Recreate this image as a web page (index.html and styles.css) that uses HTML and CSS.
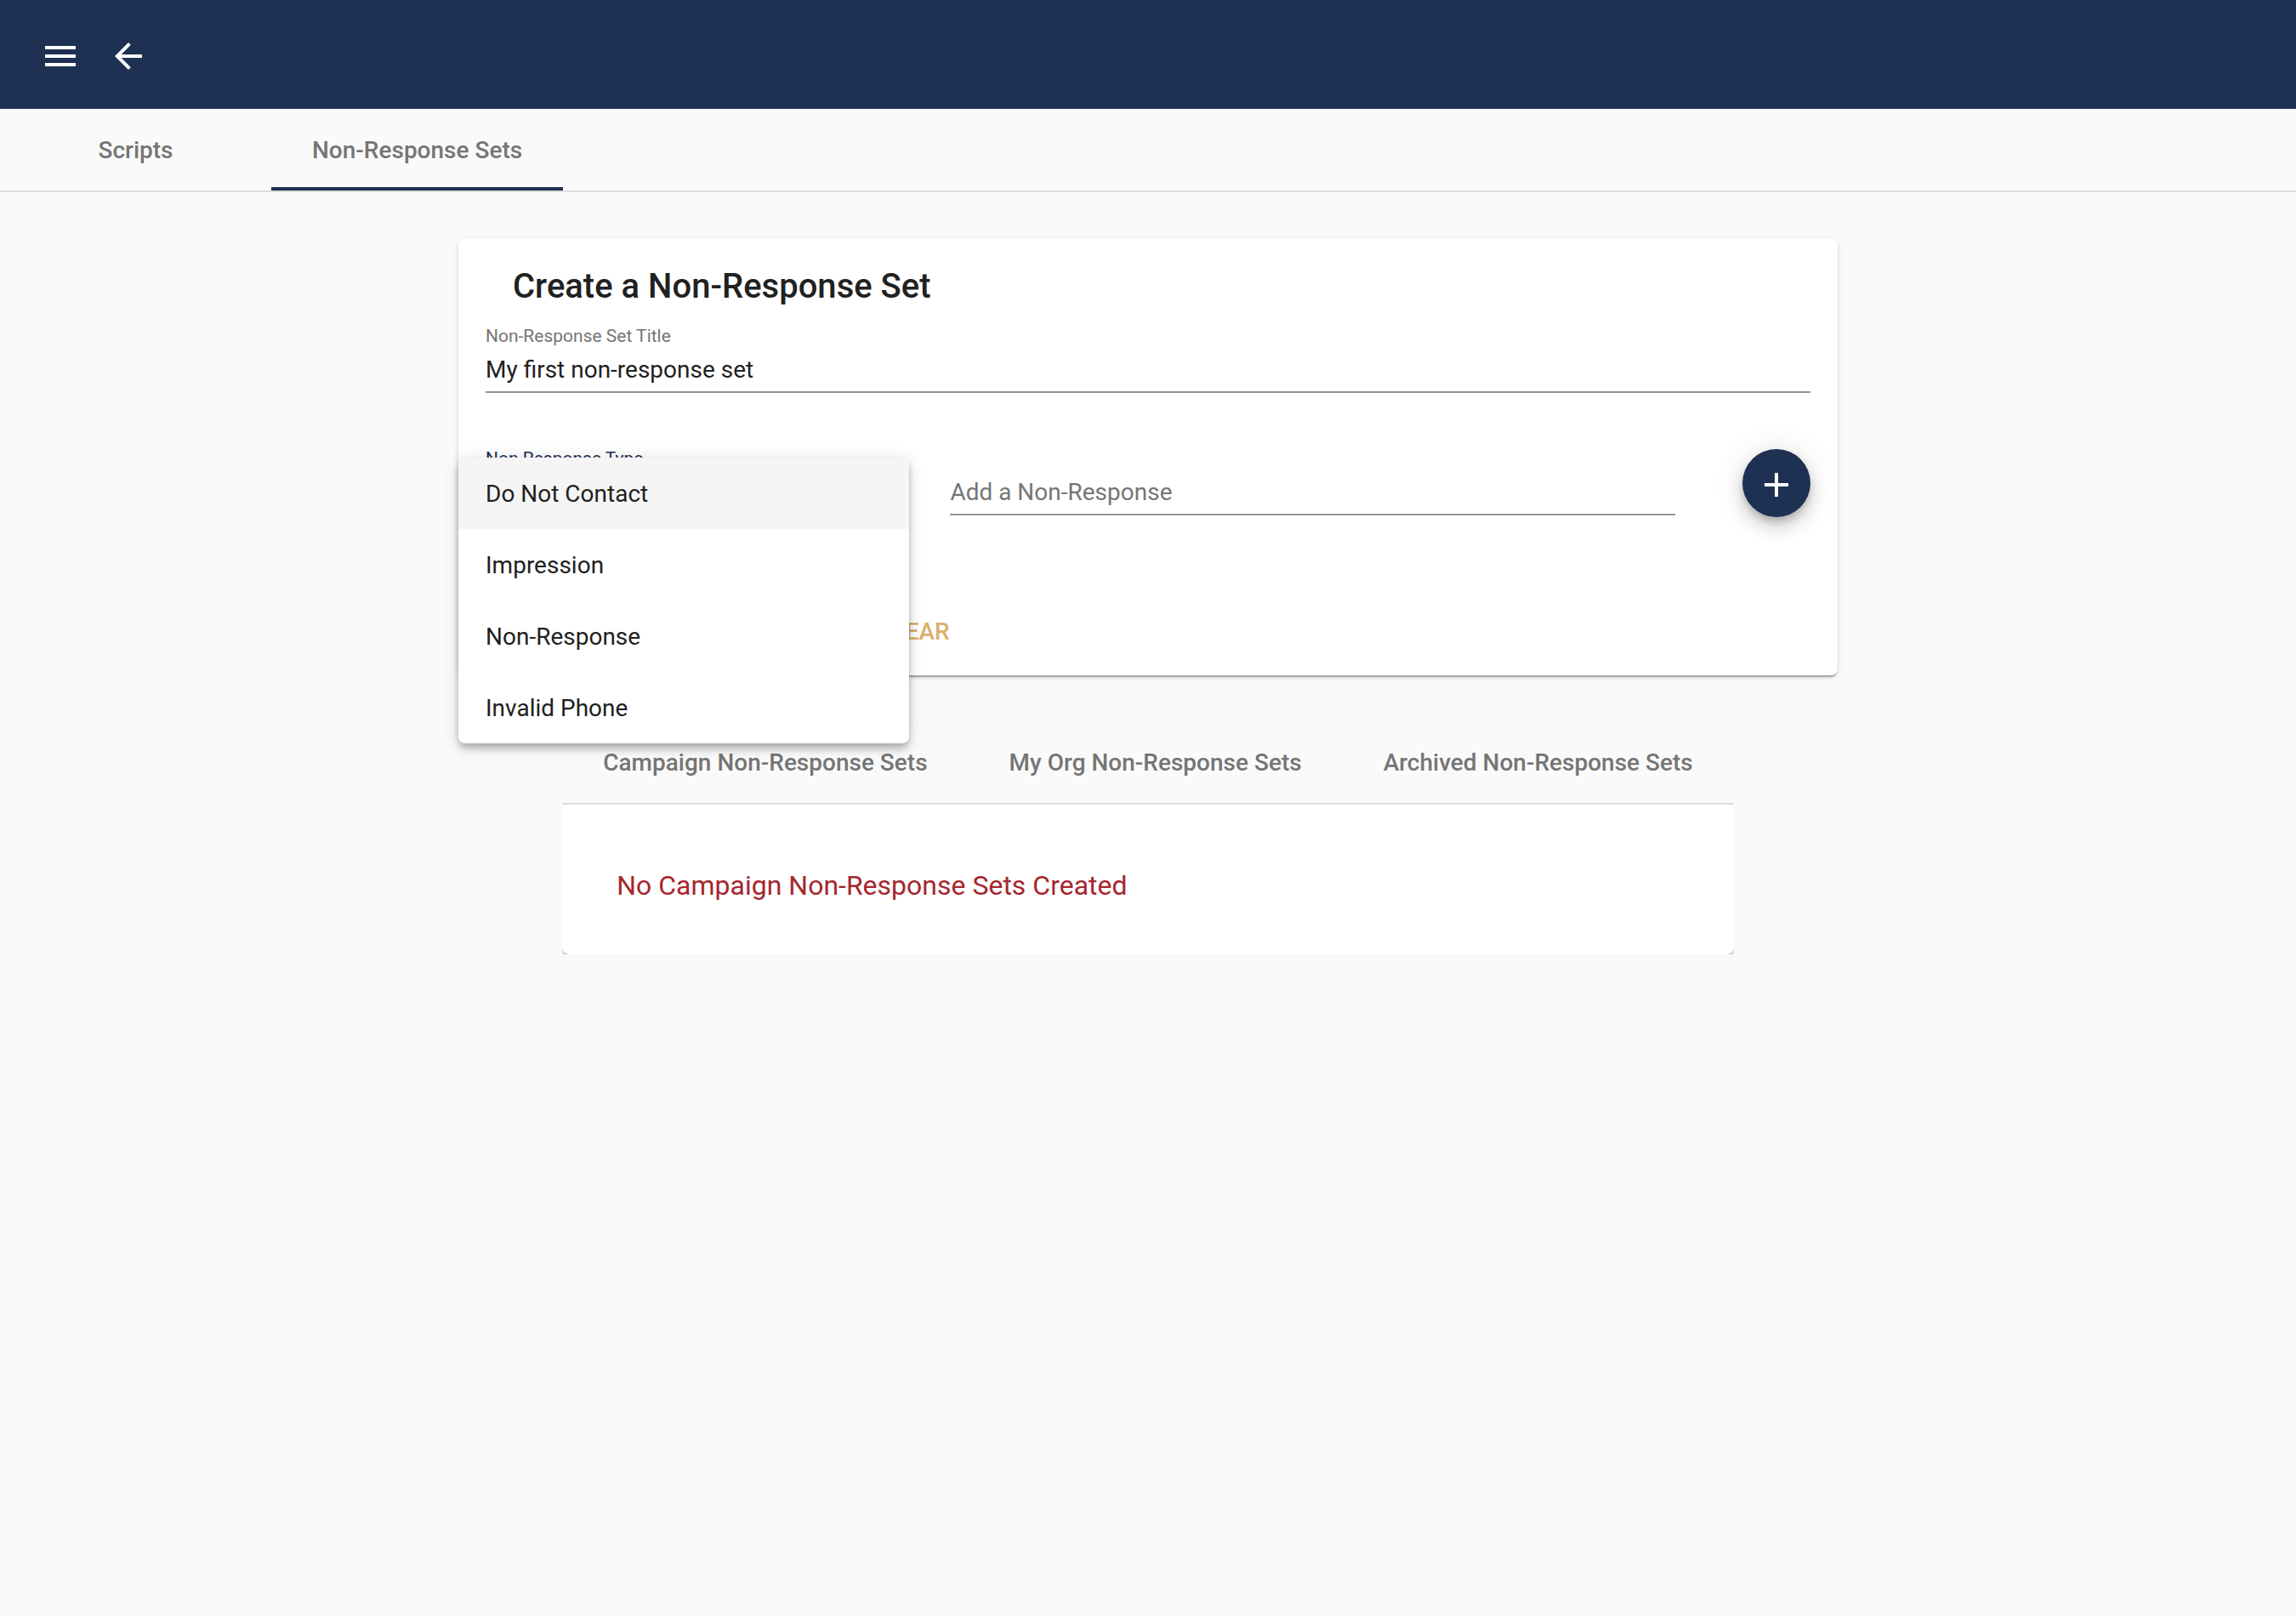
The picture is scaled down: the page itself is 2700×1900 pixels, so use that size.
FILE: index.html
```
<!DOCTYPE html>
<html lang="en">
<head>
<meta charset="utf-8">
<meta name="viewport" content="width=device-width, initial-scale=1">
<title>Non-Response Sets</title>
<link rel="stylesheet" href="styles.css">
</head>
<body>
<header class="toolbar">
  <button class="icon-button" type="button" aria-label="Menu">
    <svg class="icon" viewBox="0 0 24 24" aria-hidden="true"><path d="M3 18h18v-2H3v2zm0-5h18v-2H3v2zm0-7v2h18V6H3z"/></svg>
  </button>
  <button class="icon-button" type="button" aria-label="Back">
    <svg class="icon" viewBox="0 0 24 24" aria-hidden="true"><path d="M20 11H7.83l5.59-5.59L12 4l-8 8 8 8 1.41-1.41L7.83 13H20v-2z"/></svg>
  </button>
</header>

<nav class="tabs">
  <a class="tab" href="#scripts"><span class="tab-label">Scripts</span></a>
  <a class="tab tab-active" href="#sets" aria-current="page"><span class="tab-label">Non-Response Sets</span></a>
</nav>

<main class="content">
  <form class="card editor">
    <h1 class="editor-title">Create a Non-Response Set</h1>
    <div class="field">
      <label class="field-label" for="set-title">Non-Response Set Title</label>
      <input class="field-input" id="set-title" type="text" value="My first non-response set">
    </div>
    <div class="response-row">
      <div class="field type-field">
        <label class="field-label field-label-focused" for="response-type">Non Response Type</label>
        <select class="field-input" id="response-type"></select>
        <ul class="menu" role="listbox" aria-label="Non Response Type">
          <li class="option option-active" role="option" aria-selected="false">Do Not Contact</li>
          <li class="option" role="option" aria-selected="false">Impression</li>
          <li class="option" role="option" aria-selected="false">Non-Response</li>
          <li class="option" role="option" aria-selected="false">Invalid Phone</li>
        </ul>
      </div>
      <div class="field field-unlabelled">
        <input class="field-input" type="text" placeholder="Add a Non-Response" aria-label="Add a Non-Response">
      </div>
      <button class="fab" type="button" aria-label="Add">
        <svg class="icon" viewBox="0 0 24 24" aria-hidden="true"><path d="M19 13h-6v6h-2v-6H5v-2h6V5h2v6h6v2z"/></svg>
      </button>
    </div>
    <div class="actions">
      <button class="clear-button" type="reset">CLEAR</button>
    </div>
  </form>

  <section class="sets">
    <nav class="tabs">
      <a class="tab" href="#campaign"><span class="tab-label">Campaign Non-Response Sets</span></a>
      <a class="tab" href="#org"><span class="tab-label">My Org Non-Response Sets</span></a>
      <a class="tab" href="#archived"><span class="tab-label">Archived Non-Response Sets</span></a>
    </nav>
    <div class="sets-body">
      <div class="card sets-card">
        <p class="empty-message">No Campaign Non-Response Sets Created</p>
      </div>
    </div>
  </section>
</main>
</body>
</html>
```
FILE: styles.css
```
:root {
  --navy: #1f3152;
  --gold: #dab06e;
  --text: #212121;
  --muted: #757575;
  --line: #949494;
}

* {
  box-sizing: border-box;
}

body {
  margin: 0;
  min-height: 100vh;
  background: #fafafa;
  color: var(--text);
  font-family: Roboto, "Liberation Sans", sans-serif;
  font-size: 28px;
}

button,
input,
select {
  font: inherit;
}

.toolbar {
  display: flex;
  align-items: center;
  gap: 32px;
  height: 128px;
  padding: 4px 47px 0;
  background: var(--navy);
}

.icon {
  display: block;
  width: 48px;
  height: 48px;
  fill: #fff;
}

.icon-button {
  padding: 0;
  border: 0;
  background: none;
}

.tabs {
  display: flex;
  border-bottom: 2px solid #dcdcdc;
}

.tab {
  display: flex;
  align-items: center;
  justify-content: center;
  min-width: 319px;
  height: 96px;
  padding: 0 48px;
  color: var(--muted);
  font-weight: 500;
  text-decoration: none;
  white-space: nowrap;
}

.tab-active {
  box-shadow: inset 0 -4px var(--navy);
}

.content {
  display: flex;
  flex-direction: column;
  align-items: center;
  gap: 54px;
  padding: 54px 0;
}

.card {
  border-radius: 8px;
  background: #fff;
  box-shadow:
    0 4px 2px -2px rgba(0, 0, 0, 0.2),
    0 2px 2px 0 rgba(0, 0, 0, 0.14),
    0 2px 6px 0 rgba(0, 0, 0, 0.12);
}

.editor {
  width: calc(60% + 2px);
  padding: 32px 32px 16px;
}

.editor-title {
  margin: 0 0 20px;
  padding-left: 32px;
  font-size: 40px;
  font-weight: 500;
  line-height: 50px;
}

.field {
  display: flex;
  flex-direction: column;
}

.field-unlabelled {
  padding-top: 26px;
}

.field-label {
  color: var(--muted);
  font-size: 21px;
  line-height: 26px;
}

.field-label-focused {
  color: var(--navy);
}

.field-input {
  width: 100%;
  height: 54px;
  padding: 0;
  border: 0;
  border-bottom: 2px solid var(--line);
  border-radius: 0;
  outline: 0;
  background: transparent;
  color: var(--text);
}

.field-input::placeholder {
  color: var(--muted);
}

.response-row {
  display: grid;
  grid-template-columns: 30% 1fr 80px;
  align-items: start;
  gap: 79px;
  min-height: 84px;
  margin-top: 64px;
}

.type-field {
  position: relative;
}

.menu {
  position: absolute;
  z-index: 1;
  top: 12px;
  left: -32px;
  width: calc(100% + 63px);
  margin: 0;
  padding: 0;
  overflow: hidden;
  border-radius: 8px;
  background: #fff;
  box-shadow:
    0 4px 8px -2px rgba(0, 0, 0, 0.2),
    0 8px 10px 0 rgba(0, 0, 0, 0.14),
    0 2px 20px 0 rgba(0, 0, 0, 0.12);
  list-style: none;
}

.option {
  padding: 2px 32px 0;
  line-height: 82px;
}

.option-active {
  background: #f5f5f5;
}

.fab {
  display: flex;
  align-items: center;
  justify-content: center;
  align-self: center;
  width: 80px;
  height: 80px;
  padding: 4px 0 0;
  border: 0;
  border-radius: 50%;
  background: var(--navy);
  box-shadow:
    0 6px 10px -2px rgba(0, 0, 0, 0.2),
    0 12px 20px 0 rgba(0, 0, 0, 0.14),
    0 2px 36px 0 rgba(0, 0, 0, 0.12);
}

.actions {
  display: flex;
  margin-top: 96px;
  padding-left: 28%;
}

.clear-button {
  height: 72px;
  padding: 0 24px;
  border: 0;
  background: none;
  color: var(--gold);
  font-weight: 500;
}

.sets-body {
  overflow: hidden;
}

.sets-card {
  padding: 76px 64px 62px;
}

.empty-message {
  margin: 0;
  color: #a6262e;
  font-size: 32px;
  line-height: 38px;
}
```
